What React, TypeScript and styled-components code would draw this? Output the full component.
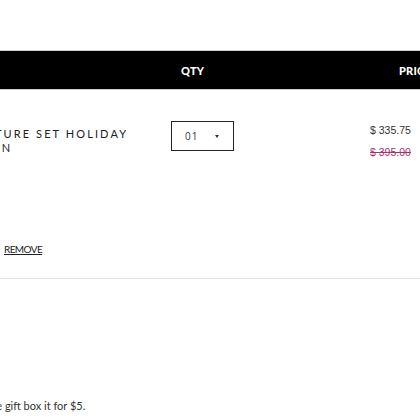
import React from 'react';
import styled, { createGlobalStyle } from 'styled-components';

const GlobalStyle = createGlobalStyle`
  html, body {
    margin: 0;
    padding: 0;
    background: #ffffff;
    overflow: hidden;
  }
  body {
    font-family: Lato, "Noto Sans", Arial, sans-serif;
    color: #222;
  }
`;

const Page = styled.div`
  width: 420px;
  height: 420px;
  overflow: hidden;
  padding-top: 50px;
  box-sizing: border-box;
`;

const HeaderBar = styled.div`
  display: grid;
  grid-template-columns: 181px 218px auto;
  align-items: center;
  height: 40px;
  background: #000;
  border-top: 1px solid #cfcfcf;
  border-bottom: 1px solid #cfcfcf;
  box-sizing: border-box;
  white-space: nowrap;
  overflow: hidden;
`;

const HeaderLabel = styled.span<{ col: number }>`
  grid-column: ${p => p.col};
  color: #fff;
  font-family: Lato, Arial, sans-serif;
  font-weight: 900;
  font-size: 11px;
  letter-spacing: 0.2px;
`;

const ItemRow = styled.div`
  display: grid;
  grid-template-columns: 171px 199px 1fr;
  padding-top: 31px;
  height: 147px;
  box-sizing: border-box;
  overflow: hidden;
`;

const NameCell = styled.div`
  overflow: hidden;
`;

const ProductName = styled.div`
  margin-left: -47px;
  margin-top: 6px;
  font-family: Lato, Arial, sans-serif;
  font-size: 11px;
  line-height: 14px;
  letter-spacing: 2.1px;
  color: #222;
  white-space: nowrap;
`;

const QtySelect = styled.div`
  width: 63px;
  height: 30px;
  border: 1px solid #222;
  box-sizing: border-box;
  display: flex;
  align-items: center;
  justify-content: space-between;
  padding: 0 14px 0 13px;
  font-family: "Open Sans", Arial, sans-serif;
  font-size: 10px;
  color: #333;
  letter-spacing: 1px;
`;

const Caret = styled.span`
  width: 0;
  height: 0;
  border-left: 2.5px solid transparent;
  border-right: 2.5px solid transparent;
  border-top: 3px solid #333;
`;

const PriceCell = styled.div`
  display: flex;
  flex-direction: column;
  gap: 9px;
  padding-top: 3px;
`;

const Price = styled.span<{ $old?: boolean }>`
  font-family: "Liberation Sans", Arial, sans-serif;
  font-size: 10.5px;
  line-height: 13px;
  color: ${p => (p.$old ? '#a4346e' : '#333')};
  text-decoration: ${p => (p.$old ? 'line-through' : 'none')};
`;

const RemoveRow = styled.div`
  padding-left: 4px;
`;

const RemoveLink = styled.a`
  font-family: Lato, Arial, sans-serif;
  font-size: 10px;
  color: #222;
  text-decoration: underline;
  letter-spacing: -0.6px;
`;

const Divider = styled.hr`
  margin: 22px 0 0;
  border: 0;
  border-top: 1px solid #e4e4e4;
`;

const GiftNote = styled.div`
  margin-top: 115px;
  white-space: nowrap;
  overflow: hidden;
`;

const GiftText = styled.span`
  display: inline-block;
  margin-left: -73px;
  font-family: Lato, Arial, sans-serif;
  font-size: 11px;
  color: #333;
`;

export default function App() {
  return (
    <>
      <GlobalStyle />
      <Page>
        <HeaderBar>
          <HeaderLabel col={2}>QTY</HeaderLabel>
          <HeaderLabel col={3}>PRICE</HeaderLabel>
        </HeaderBar>
        <ItemRow>
          <NameCell>
            <ProductName>
              MINIATURE SET HOLIDAY
              <br />
              EDITION
            </ProductName>
          </NameCell>
          <div>
            <QtySelect>
              <span>01</span>
              <Caret />
            </QtySelect>
          </div>
          <PriceCell>
            <Price>$ 335.75</Price>
            <Price $old>$ 395.00</Price>
          </PriceCell>
        </ItemRow>
        <RemoveRow>
          <RemoveLink href="#">REMOVE</RemoveLink>
        </RemoveRow>
        <Divider />
        <GiftNote>
          <GiftText>Add a signature gift box it for $5.</GiftText>
        </GiftNote>
      </Page>
    </>
  );
}
